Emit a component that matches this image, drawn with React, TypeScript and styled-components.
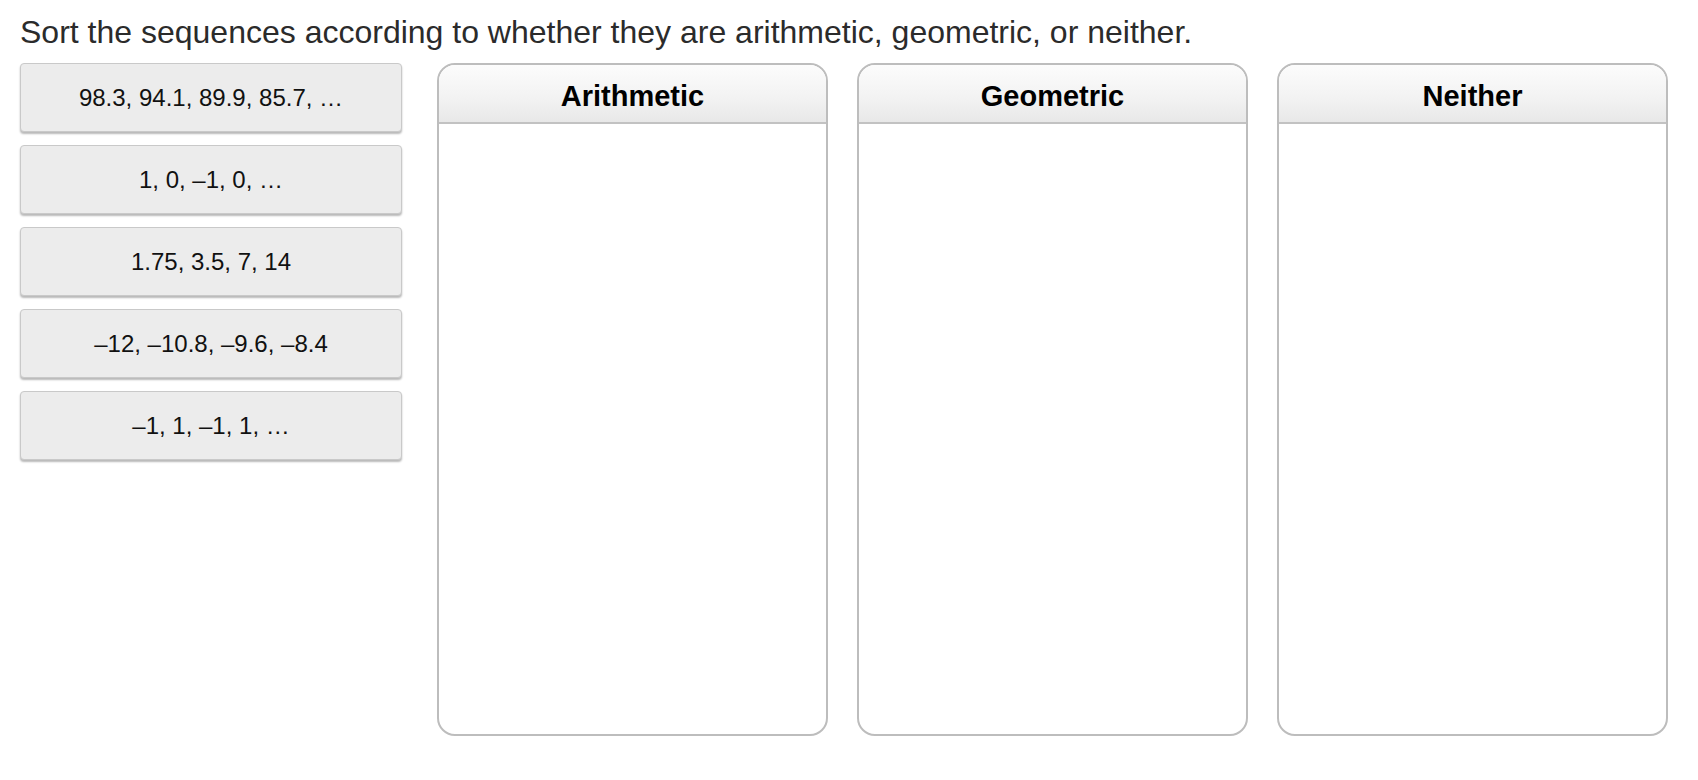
import React from 'react'
import styled, { createGlobalStyle } from 'styled-components'

const sequences = [
  '98.3, 94.1, 89.9, 85.7, …',
  '1, 0, –1, 0, …',
  '1.75, 3.5, 7, 14',
  '–12, –10.8, –9.6, –8.4',
  '–1, 1, –1, 1, …'
]

const categories = ['Arithmetic', 'Geometric', 'Neither']

const GlobalStyle = createGlobalStyle`
  html, body {
    margin: 0;
    padding: 0;
    background: #ffffff;
  }
  body {
    font-family: "Liberation Sans", Arial, Helvetica, sans-serif;
    color: #222;
  }
`

const Page = styled.div`
  padding: 14px 20px 0 20px;
`

const Prompt = styled.div`
  font-size: 32px;
  line-height: 36px;
  color: #2b2b2b;
  margin-bottom: 13px;
`

const Board = styled.div`
  display: flex;
  align-items: flex-start;
  gap: 35px;
`

const Tray = styled.div`
  width: 382px;
  display: flex;
  flex-direction: column;
  gap: 13px;
`

const Tile = styled.div`
  box-sizing: border-box;
  height: 69px;
  display: flex;
  align-items: center;
  justify-content: center;
  background: #ececec;
  border: 1px solid #c9c9c9;
  border-radius: 4px;
  box-shadow: 0 2px 2px rgba(0, 0, 0, 0.28);
  font-size: 24px;
  color: #111;
`

const Bins = styled.div`
  display: grid;
  grid-template-columns: repeat(3, 391px);
  gap: 29px;
`

const Bin = styled.div`
  box-sizing: border-box;
  height: 673px;
  border: 2px solid #bdbdbd;
  border-radius: 18px;
  overflow: hidden;
  background: #fff;
`

const BinHeader = styled.div`
  box-sizing: content-box;
  height: 42px;
  padding-top: 15px;
  border-bottom: 2px solid #c2c2c2;
  background: linear-gradient(to bottom, #fcfcfc 0%, #f3f3f3 55%, #e8e8e8 100%);
  text-align: center;
  font-size: 29px;
  line-height: 33px;
  font-weight: bold;
  color: #000;
`

export default function App() {
  return (
    <>
      <GlobalStyle />
      <Page>
        <Prompt>
          Sort the sequences according to whether they are arithmetic,
          geometric, or neither.
        </Prompt>
        <Board>
          <Tray>
            {sequences.map((s) => (
              <Tile key={s}>{s}</Tile>
            ))}
          </Tray>
          <Bins>
            {categories.map((c) => (
              <Bin key={c}>
                <BinHeader>{c}</BinHeader>
              </Bin>
            ))}
          </Bins>
        </Board>
      </Page>
    </>
  )
}
